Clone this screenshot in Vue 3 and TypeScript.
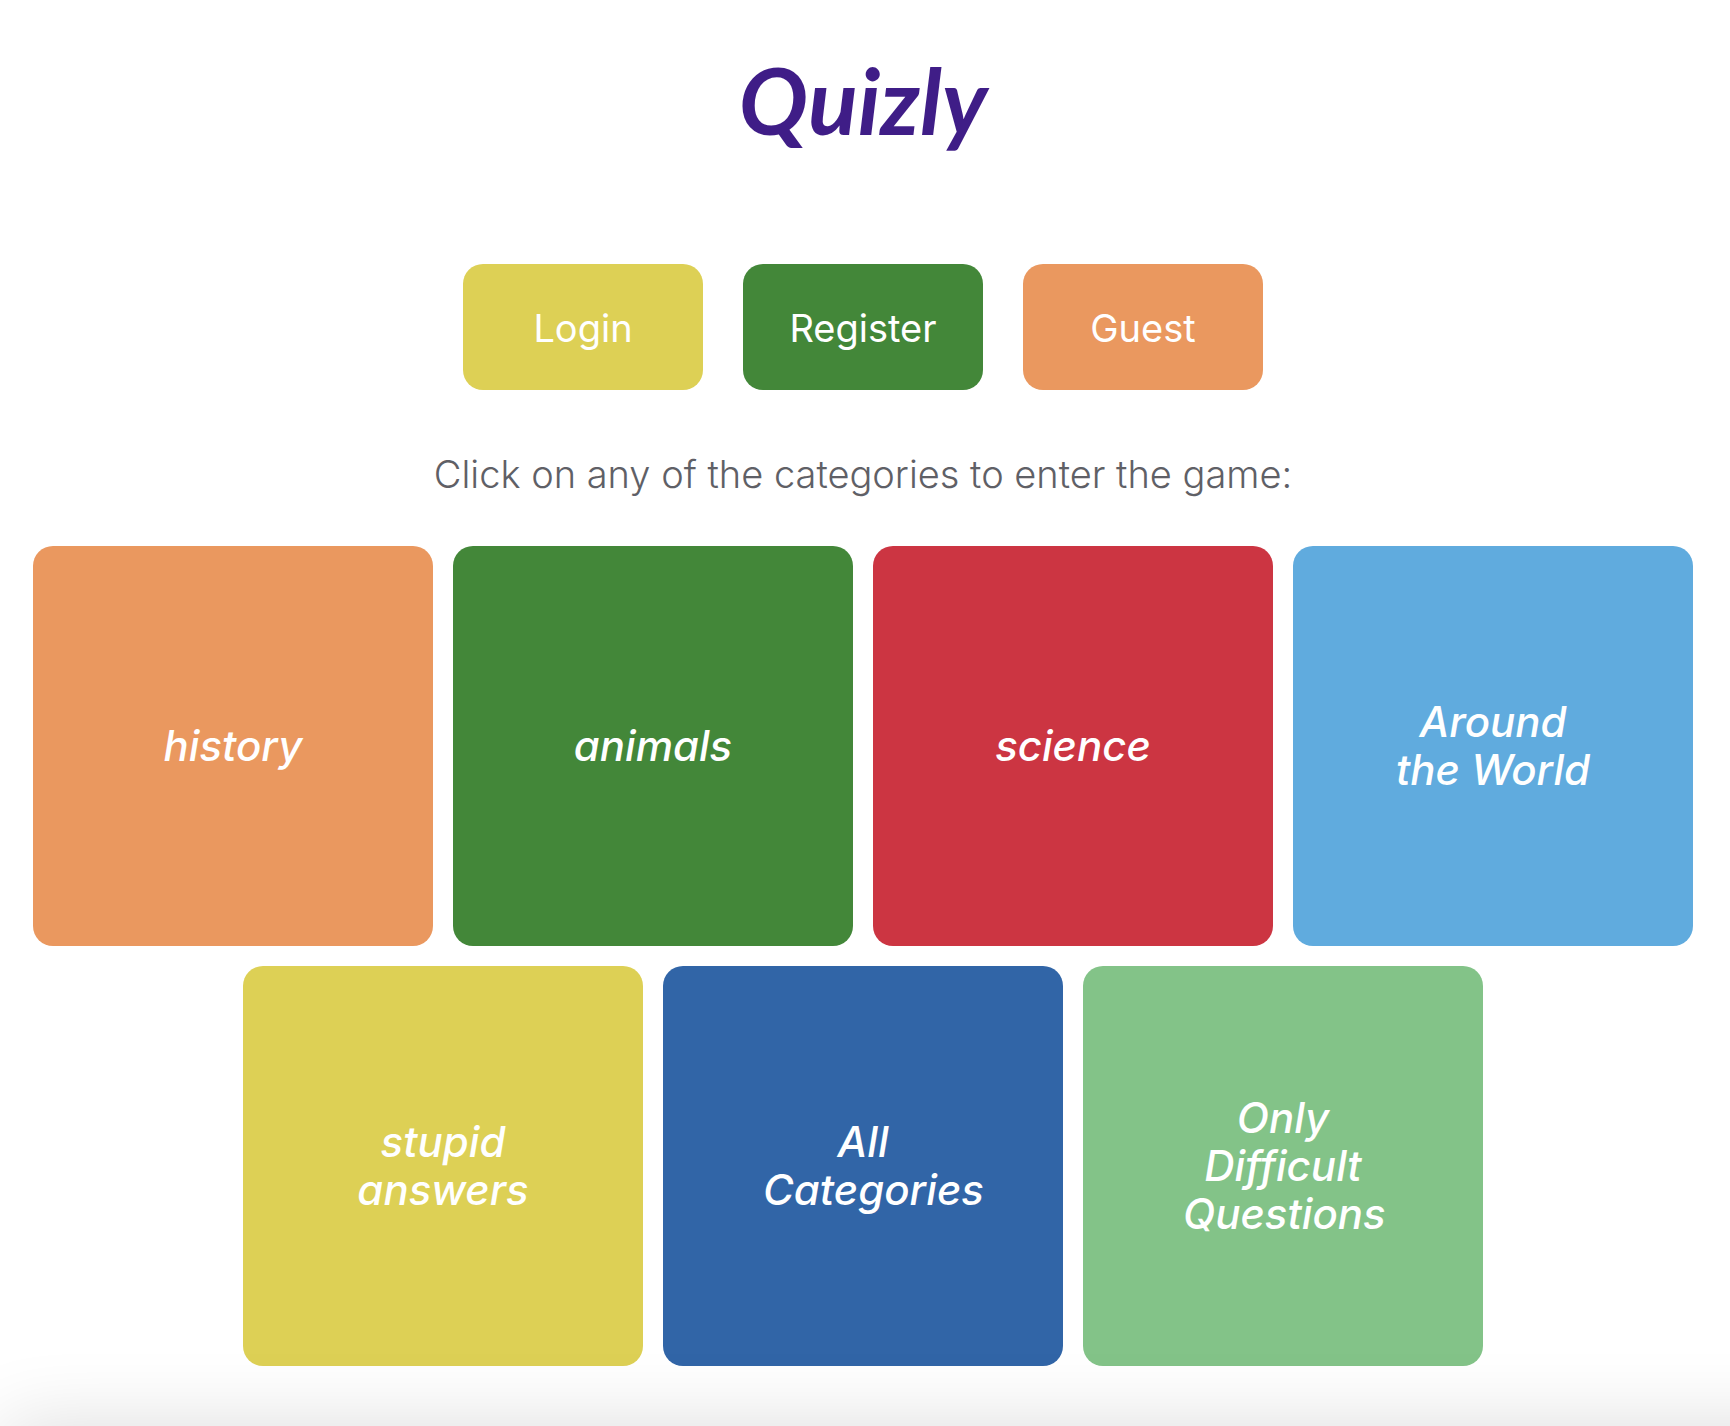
<script setup lang="ts">
interface Tile {
  label: string
  tone: string
}

const actions: Tile[] = [
  { label: 'Login', tone: 'yellow' },
  { label: 'Register', tone: 'green' },
  { label: 'Guest', tone: 'orange' },
]

const categories: Tile[] = [
  { label: 'history', tone: 'orange' },
  { label: 'animals', tone: 'green' },
  { label: 'science', tone: 'red' },
  { label: 'Around the World', tone: 'sky' },
  { label: 'stupid answers', tone: 'yellow' },
  { label: 'All Categories', tone: 'blue' },
  { label: 'Only Difficult Questions', tone: 'mint' },
]
</script>

<template>
  <main class="page">
    <h1 class="logo">Quizly</h1>
    <nav class="actions">
      <button v-for="item in actions" :key="item.label" type="button" class="action" :class="item.tone">
        {{ item.label }}
      </button>
    </nav>
    <p class="hint">Click on any of the categories to enter the game:</p>
    <section class="categories">
      <button v-for="item in categories" :key="item.label" type="button" class="category" :class="item.tone">
        <span class="category-label">{{ item.label }}</span>
      </button>
    </section>
    <div class="shade"></div>
  </main>
</template>

<style>
body {
  margin: 0;
  background: #fff;
}
</style>

<style scoped>
.page {
  box-sizing: border-box;
  display: flex;
  flex-direction: column;
  align-items: center;
  padding: 40px 24px 60px 20px;
  font-family: Inter, "Liberation Sans", sans-serif;
}

.logo {
  margin: 0;
  font-family: Lato, "Liberation Sans", sans-serif;
  font-size: 92px;
  font-style: italic;
  font-weight: 700;
  line-height: 120px;
  color: #3f1d87;
}

.actions {
  display: flex;
  flex-wrap: wrap;
  justify-content: center;
  gap: 40px;
  margin-top: 104px;
}

.action,
.category {
  border: 0;
  border-radius: 20px;
  color: #fff;
  font-family: inherit;
  cursor: pointer;
}

.action {
  width: 240px;
  height: 126px;
  padding: 2px 0 0;
  font-size: 38px;
}

.hint {
  margin: 60px 0 0;
  font-size: 38px;
  font-weight: 300;
  line-height: 48px;
  text-align: center;
  color: #5f6066;
}

.categories {
  display: flex;
  flex-wrap: wrap;
  justify-content: center;
  gap: 20px;
  margin-top: 48px;
}

.category {
  width: 400px;
  height: 400px;
  padding: 0 100px;
  font-size: 42px;
  font-style: italic;
  font-weight: 500;
  line-height: 48px;
}

.category-label {
  display: block;
}

.yellow { background: #ddd055; }
.green { background: #438739; }
.orange { background: #ea985f; }
.red { background: #cc3542; }
.sky { background: #60abde; }
.blue { background: #3165a7; }
.mint { background: #83c388; }

/* soft shadow rising from the bottom edge of the window */
.shade {
  position: fixed;
  top: 100%;
  left: 4px;
  right: -100px;
  height: 100px;
  box-shadow: 0 0 80px rgba(0, 0, 0, 0.14);
  pointer-events: none;
}
</style>
